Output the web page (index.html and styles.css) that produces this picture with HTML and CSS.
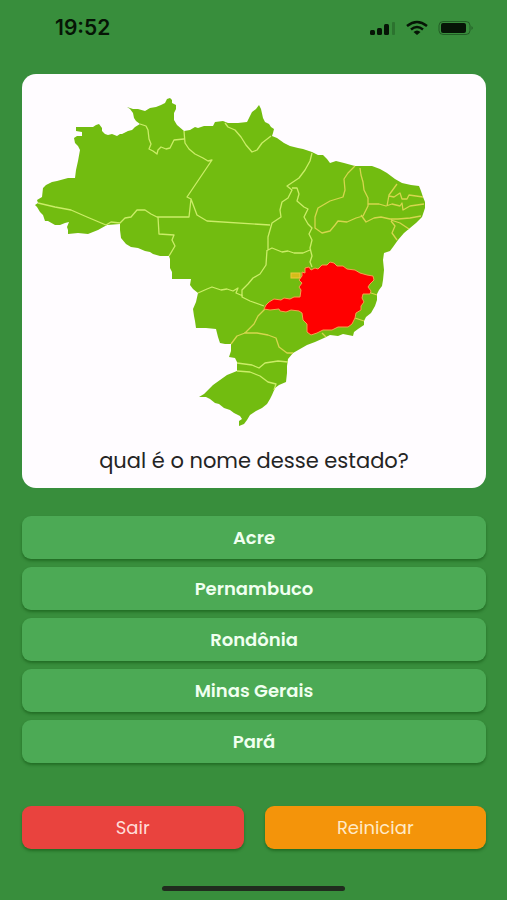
FILE: index.html
```
<!doctype html>
<html lang="pt-BR">

<head>
    <meta charset="UTF-8">
    <meta name="viewport" content="width=device-width, initial-scale=1.0">
    <link rel="stylesheet" href="styles.css">
    <title>Quiz dos Estados</title>
</head>

<body>
    <header class="status-bar">
        <span class="clock">19:52</span>
        <div class="status-icons">
            <svg width="26" height="16" viewBox="0 0 26 16" aria-hidden="true">
                <rect x="0" y="10" width="5" height="5" rx="1.500" />
                <rect x="7" y="8" width="5" height="7" rx="1.500" />
                <rect x="14" y="4" width="5" height="11" rx="1.500" />
                <rect x="22" y="2" width="3" height="13" rx="1" opacity=".22" />
            </svg>
            <svg width="22" height="16" viewBox="0 0 22 16" aria-hidden="true">
                <g fill="none" stroke="#061506" stroke-width="2.500">
                    <path d="M1 6Q11-2 21 6" />
                    <path d="M5 9.500Q11 4.500 17 9.500" />
                </g>
                <path d="M7.500 12Q11 9 14.500 12L11 15z" />
            </svg>
            <svg width="36" height="16" viewBox="0 0 36 16" aria-hidden="true">
                <rect x="1" y="1.500" width="31" height="13" rx="4" fill="none" stroke="#061506" opacity=".4" />
                <rect x="3" y="3" width="25" height="10" rx="2" />
                <path d="M33.500 6Q36 8 33.500 10z" opacity=".4" />
            </svg>
        </div>
    </header>

    <main class="quiz">
        <section class="card">
            <svg class="map" viewBox="22 92 464 346" role="img" aria-label="Mapa do Brasil">
                <path class="country" d="M76 127L82 127 93 127 96 125 99 124 102 128 102 131 105 134 108 135 112 134 117 136 120 134 122 134 128 131 132 130 135 127 140 124 136 121 134 118 133 113 130 109 127 107 133 109 138 109 145 111 150 108 156 107 161 105 165 103 167 99 170 98 172 100 172 103 176 105 176 109 174 113 174 120 177 125 184 131 190 130 195 127 198 128 204 126 213 126 215 122 223 121 228 123 238 123 247 122 250 116 252 112 256 109 259 105 261 109 263 118 265 122 269 124 271 127 274 129 273 133 272 136 277 138 284 143 290 146 298 148 303 149 312 152 318 155 323 155 327 159 330 163 336 161 344 163 355 166 372 166 380 169 387 173 395 179 402 183 411 185 419 186 421 191 423 197 425 202 425 208 422 217 416 223 410 228 404 233 398 240 393 247 390 251 384 253 383 260 384 270 383 280 382 286 379 290 377 294 377 300 375 306 371 313 366 317 364 321 364 325 358 329 354 332 353 336 343 334 338 336 330 335 324 338 315 342 307 345 300 349 293 353 288 359 287 366 287 373 286 382 279 385 275 388 272 395 270 399 267 404 262 408 256 411 250 415 247 420 244 424 239 426 239 421 242 419 240 416 234 413 230 410 224 408 219 404 215 403 210 399 206 397 199 397 204 394 213 385 220 380 227 375 237 371 237 362 235 358 229 357 231 351 231 344 225 344 220 343 218 337 216 329 206 328 196 328 195 321 194 316 193 309 196 302 198 293 193 289 190 285 191 279 172 279 172 272 170 268 170 259 169 256 160 256 153 254 150 252 145 251 138 248 131 247 126 244 121 238 120 230 120 224 107 225 98 230 88 234 78 233 68 234 68 230 67 227 69 222 65 223 60 225 55 225 48 221 45 221 43 215 40 212 37 207 35 205 38 203 37 200 42 197 43 188 46 185 52 182 57 181 68 178 75 178 76 170 78 161 80 150 78 146 75 143 74 138 77 136 82 136 82 132 76 131z" />
                <path class="borders" d="M38 203L55 207 71 210 87 217 106 225 111 222 120 223 125 218 131 217 137 210 145 210 151 214 157 217H189L191 199 187 197 212 160 208 161 203 158 195 154 189 149 185 143 184 131
                    M140 124L146 126 148 130 149 139 151 144 149 149 153 151 157 154 158 150 161 147 166 149 170 148 174 140 184 139
                    M225 123L228 127 235 130 241 137 246 145 252 152 257 150 262 143 271 136
                    M191 199L197 215 207 221 270 225
                    M158 217L159 234 174 235 172 240 175 246 169 256
                    M312 153L310 161 305 170 299 178 287 186 292 190 288 198 282 202 280 210 281 217 272 223 268 237 268 250 272 248 277 250 282 252 288 251 294 253 303 253 310 250
                    M292 188L297 188 299 194 297 201 304 207 308 209 304 217 308 224 312 228 309 234 312 240 310 248 312 256 310 262 312 267
                    M267 250L266 265 260 274 253 278 248 284 242 290 242 297 250 301 264 306
                    M198 293L207 289 212 287 221 290 227 289 233 291 238 288 236 293 243 296
                    M237 363L252 365 259 368 265 363 278 361 288 362M237 371L250 372 260 376 268 382 276 384 274 390" />
                <path class="borders warm" d="M355 166L348 173 344 179 345 190 343 197 330 201 318 208 315 217 315 228 322 233 330 231 335 225 338 221 347 222 356 218 363 216 368 206 368 198 364 190 363 182 361 175 360 168
                    M368 204L379 204 386 206 392 204 400 206 402 203 403 210 410 206 424 204
                    M397 184L389 195 387 206M389 196L394 197 400 193 402 199 407 199 409 195 423 197
                    M361 215L366 222 374 218 381 217 390 219 398 219 410 218 421 216M391 220L400 223 409 229M391 221L395 226 392 233 397 240
                    M266 308L258 316 254 324 245 333 237 336 231 344
                    M244 333L257 333 268 335 276 338 279 347 287 353 293 353
                    M371 293L377 295M355 318L364 321M322 333L326 337" />
                <path class="selected" d="M264 309L266 305 269 302 274 299 281 300 284 298 290 299 294 297 300 297 301 290 299 287 302 283 299 280 302 276 302 272 305 273 305 268 309 267 311 270 315 268 318 269 322 265 327 265 330 262 334 263 337 266 343 266 347 269 355 270 360 273 367 275 373 276 374 280 370 284 368 287 371 291 370 294 363 294 362 298 364 302 361 306 361 310 356 313 355 318 352 324 348 327 338 327 332 330 323 330 317 333 311 335 307 332 307 324 303 320 302 313 299 311 291 310 286 312 280 311 279 309 270 310z" />
                <rect class="capital" x="291" y="273" width="9" height="5" />
            </svg>
            <h1 class="question">qual é o nome desse estado?</h1>
        </section>

        <div class="options">
            <button type="button" class="btn option">Acre</button>
            <button type="button" class="btn option">Pernambuco</button>
            <button type="button" class="btn option">Rondônia</button>
            <button type="button" class="btn option">Minas Gerais</button>
            <button type="button" class="btn option">Pará</button>
        </div>

        <div class="actions">
            <button type="button" class="btn exit">Sair</button>
            <button type="button" class="btn restart">Reiniciar</button>
        </div>
    </main>

    <div class="home-indicator"></div>
</body>

</html>
```

FILE: styles.css
```
* {
    box-sizing: border-box;
}

body {
    margin: 0;
    min-height: 100vh;
    display: flex;
    flex-direction: column;
    background-color: #388e3c;
    font-family: Poppins, Inter, sans-serif;
}

.status-bar {
    display: flex;
    align-items: center;
    justify-content: space-between;
    padding: 16px 33px 0 55px;
    color: #061506;
}

.clock {
    font-family: Inter, sans-serif;
    font-size: 21px;
    line-height: 24px;
    font-weight: 600;
}

.status-icons {
    display: flex;
    align-items: center;
    gap: 10px;
    fill: #061506;
}

.quiz {
    padding: 34px 21px 0 22px;
}

.card {
    background-color: #fffcff;
    border-radius: 14px;
    padding: 18px 0 12px;
}

.map {
    display: block;
    width: 100%;
}

.country {
    fill: #72bc10;
}

.borders {
    fill: none;
    stroke: #cbed68;
    stroke-width: 1.3;
    stroke-linejoin: round;
}

.warm {
    stroke: #d5d64e;
}

.selected {
    fill: #ff0000;
    stroke: #f5a04c;
    stroke-linejoin: round;
}

.capital {
    fill: #d5bd18;
    stroke: #f0c63c;
}

.question {
    margin: 8px 0 0;
    color: #242424;
    font-size: 21px;
    line-height: 30px;
    font-weight: 400;
    text-align: center;
}

.options {
    display: flex;
    flex-direction: column;
    gap: 8px;
    margin-top: 28px;
}

.btn {
    height: 43px;
    border: none;
    border-radius: 9px;
    color: #f0fff0;
    font-family: inherit;
    font-size: 18px;
    line-height: 24px;
    box-shadow: 0 2px 3px rgba(0, 60, 0, 0.4);
    cursor: pointer;
}

.option {
    background-color: #4caa55;
    font-weight: 600;
}

.actions {
    display: grid;
    grid-template-columns: 1fr 1fr;
    gap: 21px;
    margin-top: 43px;
}

.exit {
    background-color: #e9433e;
    color: #ffdcd8;
}

.restart {
    background-color: #f4940a;
    color: #ffeac8;
}

.home-indicator {
    width: 36%;
    height: 5px;
    margin: auto auto 9px;
    border-radius: 3px;
    background-color: #202c1e;
}
```
